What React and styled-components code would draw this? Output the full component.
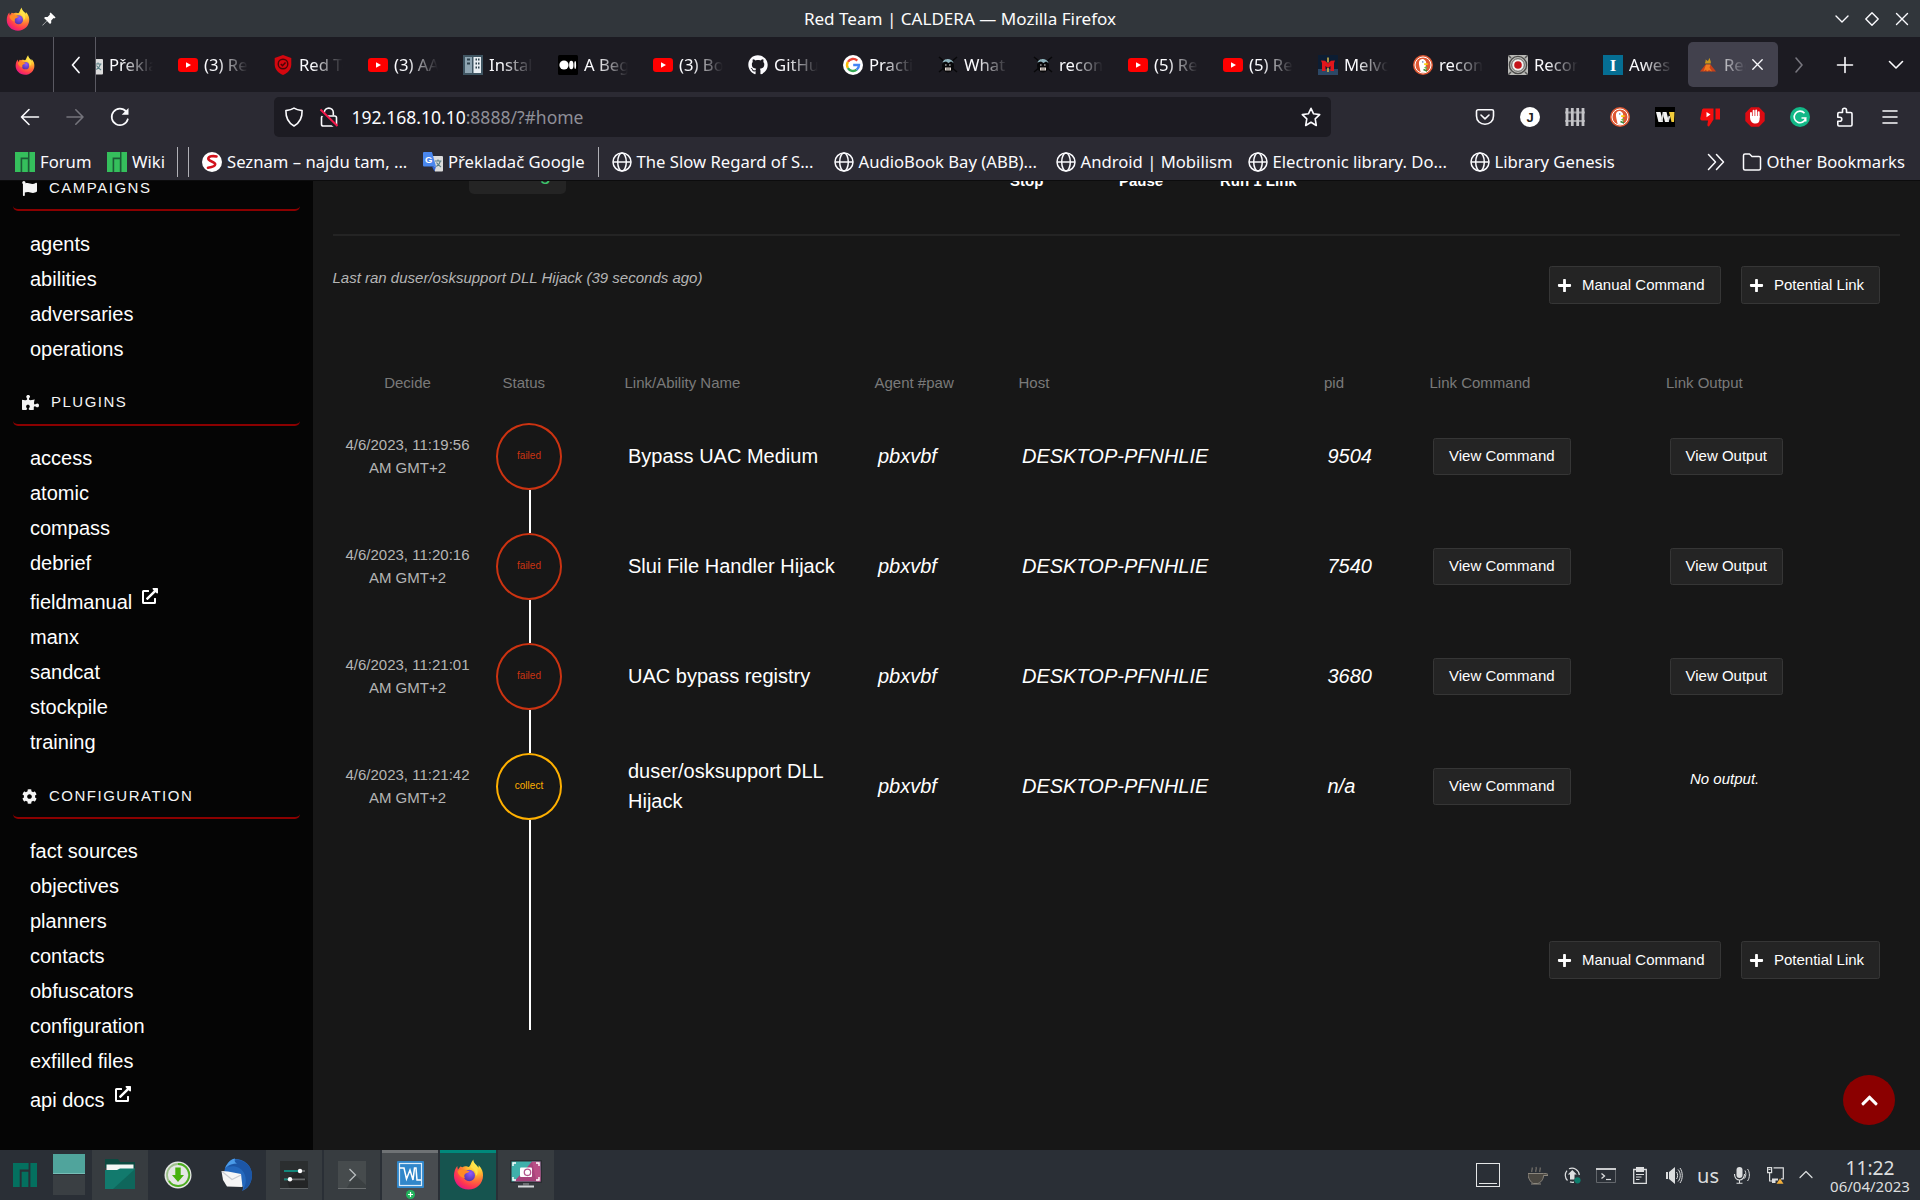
import React from "react";
import styled, { createGlobalStyle } from "styled-components";
import { FaFlag, FaPuzzlePiece, FaCog, FaExternalLinkAlt, FaPlus, FaChevronUp, FaGithub } from "react-icons/fa";

const ui = `"Noto Sans", "Open Sans", sans-serif`;
const web = `"Liberation Sans", Arial, sans-serif`;

const Global = createGlobalStyle`
  * { box-sizing: border-box; }
  html, body { margin: 0; padding: 0; background: #171717; }
  body { overflow: hidden; }
  svg { display: block; flex: none; }
`;

/* ---------- icons ---------- */

const Svg = ({ s = 20, w, h, box = "0 0 20 20", children, ...rest }) => (
  <svg width={w || s} height={h || s} viewBox={box} fill="none" {...rest}>
    {children}
  </svg>
);

const Firefox = ({ s, id }) => (
  <Svg s={s} box="0 0 32 32">
    <defs>
      <radialGradient id={id + "a"} cx="0.78" cy="0.12" r="1">
        <stop offset="0.05" stopColor="#fff44f" />
        <stop offset="0.35" stopColor="#ffbd2f" />
        <stop offset="0.58" stopColor="#ff7139" />
        <stop offset="0.8" stopColor="#ff3750" />
        <stop offset="1" stopColor="#e31587" />
      </radialGradient>
      <radialGradient id={id + "b"} cx="0.6" cy="0.3" r="0.8">
        <stop offset="0" stopColor="#9059ff" />
        <stop offset="1" stopColor="#4b2fa0" />
      </radialGradient>
    </defs>
    <path d="M16 31.500C7.500 31.500 1 25 1 17.200 1 13.500 2.300 9.600 4.400 7.300L5 11 7.600 7.700 9.800 8.400C12 7 15 7.800 16 8.200 18 8 18.400 3.500 21 .5c0 4 3.500 5.500 5.400 8.500l.1-2.500C30 10 31 13.400 31 17 31 25.300 24.500 31.500 16 31.500z" fill={`url(#${id}a)`} />
    <circle cx="16.800" cy="17" r="5.900" fill={`url(#${id}b)`} />
    <path d="M4.600 13C6.500 10.300 10 9.800 12.600 11.300c1.300.9 3 1.100 4.500 1.100-.5 1.700-2.800 2-4 2.600-1.600.8-2 3-.7 4.600-3.500 0-6.500-2.600-7.800-6.600z" fill="#ff8a25" />
    <path d="M18 8c3 1.800 6 5 5.700 9.500C26 15.500 26 12 24.500 9.500 23 7.500 21.500 6 21.200 3.500 20 5 19.500 7 18 8z" fill="#ffe14a" />
  </Svg>
);

const Pin = () => (
  <Svg s={14} box="0 0 14 14">
    <path d="M8.600.4 13.600 5.400 12.200 6.400 11.600 6 9.200 8.600 9.200 11 8 12 5 9 .7 13.600.3 13.200 4.800 8.800 2 5.900 3.200 4.900 5.500 4.900 8 2.400 7.600 1.700z" fill="#fcfcfc" />
  </Svg>
);

const Line = ({ d, s = 20, color = "#fbfbfe", sw = 1.6, box = "0 0 20 20" }) => (
  <Svg s={s} box={box} stroke={color} strokeWidth={sw} strokeLinecap="round" strokeLinejoin="round">
    <path d={d} />
  </Svg>
);

const Youtube = () => (
  <Svg>
    <rect x="0" y="3" width="20" height="14" rx="3.200" fill="#f00" />
    <path d="M8 7.200 13 10 8 12.800z" fill="#fff" />
  </Svg>
);
const RedShield = () => (
  <Svg>
    <path d="M10 0 18.300 3V9.500C18.300 14.500 14.500 18.300 10 20 5.500 18.300 1.700 14.500 1.700 9.500V3z" fill="#d4070f" />
    <circle cx="10" cy="9" r="4.800" stroke="#4a0507" strokeWidth="1.400" />
    <path d="m7.800 9 1.700 1.700 3-3.200" stroke="#4a0507" strokeWidth="1.500" />
  </Svg>
);
const Cabinet = () => (
  <Svg>
    <rect width="20" height="20" fill="#3f5562" />
    <rect x="2" y="2" width="7" height="16" fill="#8fa5b2" />
    <rect x="10.500" y="2" width="7.500" height="16" fill="#e8eef2" />
    <path d="M4 4.500h3M4 8.500h3M12.500 4.500h1.500M15 4.500h1.500M12.500 8.500h1.500M15 8.500h1.500M12.500 12.500h1.500M15 12.500h1.500" stroke="#2f424d" strokeWidth="2" />
  </Svg>
);
const Medium = () => (
  <Svg>
    <rect width="20" height="20" rx="1.500" fill="#000" />
    <circle cx="6" cy="10" r="4.600" fill="#fff" />
    <ellipse cx="13.300" cy="10" rx="2.200" ry="4.300" fill="#fff" />
    <ellipse cx="17.200" cy="10" rx=".9" ry="3.900" fill="#fff" />
  </Svg>
);
const GoogleG = () => (
  <Svg>
    <circle cx="10" cy="10" r="10" fill="#fff" />
    <path d="M14.300 5.600A6 6 0 0 0 4.900 6.900" stroke="#ea4335" strokeWidth="2.400" />
    <path d="M4.900 6.900a6 6 0 0 0 0 6.200" stroke="#fbbc05" strokeWidth="2.400" />
    <path d="M4.900 13.100a6 6 0 0 0 8.700 1.700" stroke="#34a853" strokeWidth="2.400" />
    <path d="M13.600 14.800A6 6 0 0 0 16 10H10.200" stroke="#4285f4" strokeWidth="2.400" />
  </Svg>
);
const Ninja = () => (
  <Svg>
    <path d="m1 2 18 15M19 2 1 17" stroke="#08080a" strokeWidth="1.500" />
    <ellipse cx="10" cy="11" rx="6" ry="6.500" fill="#08080a" />
    <path d="M4.500 7.500C5.500 4.500 8 4 10 4S14.500 5 15.500 8l-2.500-1.500L10.500 8 8 6.500z" fill="#8fb3bd" />
    <path d="M7 10h1.600M11 10h1.600" stroke="#d9d9d9" strokeWidth="1.200" />
    <path d="M7 12.500h6v3H7z" fill="#e6dcd5" />
    <path d="M9 12.500v3M11 12.500v3" stroke="#333" strokeWidth=".7" />
  </Svg>
);
const Melvor = () => (
  <Svg>
    <rect width="20" height="20" fill="#0c1d33" />
    <rect y="14" width="20" height="6" fill="#2c4866" />
    <path d="M4 16V8L3 5.500l4 .3L10 8.500l3-2.700 4-.3L16 8v8h-3.500V11L10 13 7.500 11v5z" fill="#e0161c" />
    <path d="M10 2.500v5M10 13v4" stroke="#e9c64b" strokeWidth="1.400" />
  </Svg>
);
const Duck = () => (
  <Svg>
    <circle cx="10" cy="10" r="10" fill="#de5833" />
    <circle cx="10" cy="10" r="8" fill="#de5833" stroke="#fff" strokeWidth="1" />
    <path d="M7.500 16.800C7 13 5.500 9.500 6 7c.5-2.500 3-3.500 5-2.500 1.500.7 2.200 2 2.200 3.800 0 1.500-.8 2.500-.6 4.200.2 1.500.7 3 1 4.300-2 1-4.300.8-6.100 0z" fill="#fff" />
    <path d="M11 8.500c1.800-.6 3.500-.4 4.700.2-.8 1.100-2.800 1.600-4.500 1.300z" fill="#fdd20a" />
    <path d="m10.800 12.600 3 1.600V11.600z" fill="#65bc46" />
    <path d="M10.500 14.500 14 16" stroke="#3a8b3a" strokeWidth="1.600" />
    <circle cx="9.800" cy="6.900" r=".7" fill="#2d4f8e" />
  </Svg>
);
const Target = () => (
  <Svg>
    <rect width="20" height="20" fill="#b9b9b6" />
    <circle cx="10" cy="10" r="8.600" stroke="#4b4b49" strokeWidth="1.400" />
    <circle cx="10" cy="10" r="6.300" fill="#f0f0ee" stroke="#5e5e5c" strokeWidth="1" />
    <circle cx="10" cy="10" r="3.800" fill="#c4141b" />
    <path d="m0 0 3 3M20 0l-3 3M0 20l3-3M20 20l-3-3" stroke="#555" strokeWidth="1.500" />
  </Svg>
);
const LetterSvg = ({ bg, color, ch, round, font = web, size = 14, weight = 400 }) => (
  <Svg>
    {round ? <circle cx="10" cy="10" r="10" fill={bg} /> : <rect width="20" height="20" fill={bg} />}
    <text x="10" y={10 + size * 0.36} textAnchor="middle" fontFamily={font} fontSize={size} fontWeight={weight} fill={color}>
      {ch}
    </text>
  </Svg>
);
const Volcano = () => (
  <Svg s={20}>
    <path d="M2 16.500 7.500 9.500h5L18 16.500z" fill="#c8401a" />
    <path d="M5.500 16.500 8 9.500h4.500l-1 3 2.500 4-3-1.500-2 1.500-1-2z" fill="#f07a1f" />
    <path d="M7 8.500c0-1.500 1-2 .5-4 1.500.5 1.600 1.500 2.300 1.500S10.500 3.500 12 3c-.5 2 1.500 3 .7 5.500z" fill="#c9961b" />
  </Svg>
);
const Manjaro = ({ s = 20, c = "#35bf5c", bg = "#1c5a36" }) => (
  <Svg s={s}>
    {bg !== "none" && <rect width="20" height="20" fill={bg} />}
    <path d="M0 0h13v5.500H5.600V20H0zM7.200 7.200H12.800V20H7.200zM14.500 0H20v20h-5.500z" fill={c} />
  </Svg>
);
const Seznam = () => (
  <Svg>
    <circle cx="10" cy="10" r="10" fill="#fff" />
    <path d="M14.500 4.500C11 3.600 6.500 4.200 6.300 6.800 6.200 9.500 13.300 9.500 13.200 12.300 13.100 14.500 9.500 15.300 6 15.800" stroke="#d2111b" strokeWidth="2.600" strokeLinecap="round" />
  </Svg>
);
const Translate = () => (
  <Svg>
    <path d="M8 4h11a1 1 0 0 1 1 1v13.500a1 1 0 0 1-1 1h-7z" fill="#dcdcdc" />
    <path d="M12 9h6.500M15 7.500V9M17.500 9c-.8 2.800-2.500 4.500-4.200 5.500M13.500 10.500c1 1.800 2.500 3 4.500 4.500" stroke="#5b7f86" strokeWidth="1.100" />
    <path d="M1 0h8l4 14.500H1a1 1 0 0 1-1-1V1a1 1 0 0 1 1-1z" fill="#4a87ee" />
    <path d="m9 14.500 4 0-1.500 5z" fill="#3367d6" />
    <text x="5.600" y="10.600" textAnchor="middle" fontFamily={web} fontSize="9.500" fontWeight="700" fill="#fff">G</text>
  </Svg>
);
const Globe = () => (
  <Svg stroke="#fbfbfe" strokeWidth="1.500">
    <circle cx="10" cy="10" r="9" />
    <ellipse cx="10" cy="10" rx="4.300" ry="9" />
    <path d="M1 10h18" />
  </Svg>
);
const Shield = () => (
  <Line d="M10 1.100C12.300 2.600 15 3.200 18.100 3.600 18.300 10.500 15.800 16 10 19 4.200 16 1.700 10.500 1.900 3.600 5 3.200 7.700 2.600 10 1.100z" />
);
const LockSlash = () => (
  <Svg>
    <path d="M5.300 8.500V5.600a4.500 4.500 0 0 1 9 0v2.900" stroke="#fbfbfe" strokeWidth="1.600" />
    <rect x="2.500" y="9" width="15" height="10" rx="1.800" stroke="#fbfbfe" strokeWidth="1.600" />
    <path d="M1 4 18 20.500" stroke="#1c1b22" strokeWidth="4" />
    <path d="M1.500 2.500 18.500 19" stroke="#f5184a" strokeWidth="2" />
  </Svg>
);
const Star = () => (
  <Line d="m10 1.300 2.600 5.500 6.100.8-4.500 4.200 1.100 6.700L10 15.300 4.700 18.500l1.100-6.700L1.300 7.600l6.100-.8z" />
);
const Pocket = () => (
  <Svg stroke="#fbfbfe" strokeWidth="1.600" strokeLinecap="round" strokeLinejoin="round">
    <path d="M3 2.800h14a1.500 1.500 0 0 1 1.500 1.500V9c0 5-3.800 8.300-8.500 8.300S1.500 14 1.500 9V4.300A1.500 1.500 0 0 1 3 2.800z" />
    <path d="m6 8 4 3.800L14 8" />
  </Svg>
);
const Fence = () => (
  <Svg>
    <path d="M0 5.500h20M0 14h20" stroke="#929297" strokeWidth="1.800" />
    <path d="M2 1v18M7.300 1v18M12.700 1v18M18 1v18" stroke="#c4c4c8" strokeWidth="2.800" />
  </Svg>
);
const Wiki = () => (
  <Svg>
    <rect width="20" height="20" fill="#000" />
    <path d="M1 5H5.500L8 15H3.500zM7.500 5H11.500L14 15H10z" fill="#f3f3f3" />
    <path d="M6.500 14 8.500 6M13 14l1.500-5" stroke="#d9d9d9" strokeWidth="1.800" />
    <path d="M14 5h5.500l-.5 10h-2.500z" fill="#f2cd3c" />
  </Svg>
);
const Dislike = () => (
  <Svg>
    <path d="M4 1.500h9.500v11L9 19.500c-1.500 0-1.800-1-1.500-2.500l.6-3.500H2C.8 13.500 0 12.500.3 11.300L2 3c.3-1 1-1.500 2-1.500zM15.500 1.500H20v11h-4.500z" fill="#f50d0d" />
    <path d="m6.500 5 4 2.600-4 2.600z" fill="#fff" />
  </Svg>
);
const Adblock = () => (
  <Svg>
    <path d="M6 .3h8L19.700 6v8L14 19.700H6L.3 14V6z" fill="#dc0b12" />
    <path d="M6 10.500V6M8.600 9.500V3.800M11.200 9.500V3.500M13.700 10V5.300" stroke="#fff" strokeWidth="1.900" strokeLinecap="round" />
    <path d="M5.200 9h9.400v3c0 3-1.600 4.500-4 4.500-3.500 0-4.800-2-5.400-4.500z" fill="#fff" />
  </Svg>
);
const Grammarly = () => (
  <Svg>
    <circle cx="10" cy="10" r="10" fill="#12b887" />
    <path d="M14.500 6.300a5.800 5.800 0 1 0 1.200 4.700H11.500M15.700 11v3.500" stroke="#fff" strokeWidth="1.600" />
  </Svg>
);
const Extension = () => (
  <Line d="M7.500 5.500V3.200a2 2 0 0 1 4 0V5.500h4.300A1.200 1.200 0 0 1 17 6.700V17.800A1.200 1.200 0 0 1 15.800 19H4a1.200 1.200 0 0 1-1.200-1.200V14.300h2a2 2 0 0 0 0-4h-2V6.700A1.200 1.200 0 0 1 4 5.500z" />
);
const Folder = () => (
  <Line d="M1.500 16.500V3.500A1.500 1.500 0 0 1 3 2h4.500L10 4.500h7A1.500 1.500 0 0 1 18.500 6v10.500A1.500 1.500 0 0 1 17 18H3a1.500 1.500 0 0 1-1.500-1.500z" sw={1.5} />
);

/* task bar icons */
const FileManager = () => (
  <Svg w={30} h={31} box="0 0 30 31">
    <path d="M0 0h13l2 3h15v6H0z" fill="#0c4a41" />
    <path d="M1.500 5.500h27V13h-27z" fill="#f4f6f5" />
    <path d="M0 11h12l3-1.500h15V30H0z" fill="#127a6d" />
    <path d="m8 30 22-20v20z" fill="#0f665b" />
  </Svg>
);
const Download = () => (
  <Svg s={28} box="0 0 28 28">
    <circle cx="14" cy="14" r="13.500" fill="#e5e7e5" />
    <circle cx="14" cy="14" r="11" stroke="#9cc08a" strokeWidth="1.800" />
    <path d="M14 3a11 11 0 1 1-9 17" stroke="#4cae1f" strokeWidth="1.800" />
    <path d="M11.300 6.500h5.400V14H20l-6 7-6-7h3.300z" fill="#47b10d" />
  </Svg>
);
const Thunderbird = () => (
  <Svg w={32} h={34} box="0 0 32 34">
    <path d="M5 10C8 4 11 1 15 1c10 0 17 7 17 16 0 8-4 14-10 16 1-2 1-3 1-5L12 28C6 26 3 20 4 15z" fill="#2468bd" />
    <path d="M17 2c8 0 15 7 15 15 0 7-4 13-9 15 3-5 4-11 1-17C21 9 14 7 8 9c2-4 5-6 9-7z" fill="#1c56a6" />
    <path d="M5 10C8 4 12 .5 15 .5c-1 2.500 0 4 2 5-4 0-8 1-12 4.500z" fill="#4b9be8" />
    <path d="M1.500 13 8 13.500 21 16 22.500 29 7 28.500 3 22z" fill="#f6f6f6" />
    <path d="m2 13.500 10 8 9-4.500" stroke="#c9ccd2" strokeWidth="1.200" />
  </Svg>
);
const Sliders = () => (
  <Svg s={28} box="0 0 28 28">
    <rect width="28" height="28" fill="#2b2e2f" />
    <path d="M18 10 28 20v8H10L6 18z" fill="#232526" />
    <path d="M4 10h21M4 18.300h21" stroke="#66696a" strokeWidth="1.800" />
    <path d="M4 10h15M4 18.300h5" stroke="#12877a" strokeWidth="1.800" />
    <circle cx="20" cy="10" r="2.200" fill="#fff" />
    <circle cx="10" cy="18.300" r="2.200" fill="#fff" />
    <path d="M0 27.500h28" stroke="#606466" />
  </Svg>
);
const Konsole = () => (
  <Svg s={28} box="0 0 28 28">
    <rect width="28" height="28" fill="#464b4d" />
    <path d="M17 14 28 24v4H8z" fill="#3b4042" />
    <path d="m11.500 8 6 6-6 6" stroke="#b8bcbe" strokeWidth="1.300" />
    <path d="M0 27.500h28" stroke="#6a6e70" />
  </Svg>
);
const Monitor = () => (
  <Svg s={27} box="0 0 27 27">
    <rect width="27" height="27" rx="1" fill="#3187ca" />
    <rect x="2.500" y="2.500" width="22" height="22" stroke="#dcecf8" strokeWidth="1.200" />
    <path d="M2.500 7H7l2.500 11 3.500-9 3 10 1.500-12 1.500 0 1 12h4" stroke="#fff" strokeWidth="1.500" />
  </Svg>
);
const Screenshot = () => (
  <Svg w={32} h={30} box="0 0 32 30">
    <rect width="32" height="23" rx="1" fill="#2a2c30" />
    <path d="M1.500 1.500h29v20h-29z" fill="#3fb0ab" />
    <path d="M4 21.500 16 8.500 22 1.500l8.500 9v11z" fill="#a8437b" />
    <path d="m22 1.500 8.500 0v20h-4z" fill="#b94d85" />
    <path d="M3 6V3h3M26 3h3v3M3 17v3h3M26 20h3v-3" stroke="#fff" strokeWidth="1.400" />
    <rect x="10" y="7.500" width="12" height="9.500" rx="1" fill="#fff" />
    <circle cx="17.500" cy="12.300" r="3.200" stroke="#b2568c" strokeWidth="1.300" />
    <path d="M13 23h6v2.500h-6z" fill="#6b6e72" />
    <path d="M8 26.500h16" stroke="#d5d8da" strokeWidth="2" />
  </Svg>
);

const tc = "#dcdedf";
const Coffee = () => (
  <Svg w={20} h={19} box="0 0 20 19">
    <path d="M4 6c-1-1.500 1-2.500 0-4.500M8 6C7 4.500 9 3.500 8 1M12 6c-1-1.500 1-2.500 0-4.500" stroke="#77736c" strokeWidth="1.200" />
    <path d="M0 7.500h15.500c2 0 3.500 0 4.500 1v1h-4.500c0 4-3 7.500-6 8h-4C2.500 16.500 0 12 0 7.500z" fill="#4a4741" stroke="#8b867d" strokeWidth="1" />
    <path d="M3 18h10" stroke="#8b867d" />
  </Svg>
);
const Update = () => (
  <Svg w={17} h={17} box="0 0 17 17">
    <path d="M5 1.800A7.300 7.300 0 0 1 15.300 8M3.500 13.500A7.300 7.300 0 0 1 3 3.600M10 15.200a7.300 7.300 0 0 1-4-.3" stroke={tc} strokeWidth="1.200" />
    <path d="m8.300 3 4.500 4.500H10.500V12.500H6V7.500H3.800z" fill={tc} />
    <circle cx="13.500" cy="13.300" r="3.100" fill="#0e7d6c" />
  </Svg>
);
const Term = () => (
  <Svg w={20} h={15} box="0 0 20 15">
    <path d="M.5 2v12.500h19V2" stroke="#63676c" />
    <path d="M0 1h20" stroke={tc} strokeWidth="1.800" />
    <path d="m5.500 5.500 3 2.500-3 2.500" stroke={tc} strokeWidth="1.300" />
    <path d="M10 11.500h5" stroke={tc} strokeWidth="1.200" />
  </Svg>
);
const Clip = () => (
  <Svg w={14} h={17} box="0 0 14 17">
    <path d="M.7 2.500h12.600v13.800H.7z" stroke={tc} strokeWidth="1.300" />
    <path d="M3 0h8v5H3z" fill={tc} />
    <path d="M3 7.500h8M3 10h5.500M3 12.500h3.500" stroke={tc} strokeWidth="1.100" />
  </Svg>
);
const Volume = () => (
  <Svg w={17} h={17} box="0 0 17 17">
    <path d="M0 5h2v7H0zM3 5l6-5v17L3 12z" fill={tc} />
    <path d="M10.500 5c1.500 1.500 1.500 5.500 0 7M12 2.500c3 3 3 9 0 12M14 1c3 4 3 11 0 15" stroke={tc} strokeWidth="1" />
  </Svg>
);
const Mic = () => (
  <Svg w={17} h={17} box="0 0 17 17">
    <rect x="2.500" y="0" width="6" height="11" rx="3" fill={tc} />
    <path d="M.5 7c0 8 10 8 10 0M5.500 13v3M2.500 16.300h6" stroke={tc} strokeWidth="1.100" />
    <path d="M11 3.500c1.200 2 1.200 6-.5 8M13.500 2c2.500 3 2.500 9 0 12" stroke={tc} strokeWidth="1" />
  </Svg>
);
const Network = () => (
  <Svg w={17} h={17} box="0 0 17 17">
    <path d="M.6.6h4v5h-4zM2.600 6v8H6M6.500.8h9.800v11H14M1.500 2.500h2" stroke={tc} strokeWidth="1.200" />
    <path d="M5 11.500h6v2H8.500v2.500H5z" fill={tc} />
    <path d="m13 11.500 3.500 5.200h-7z" fill="#f3b13c" />
  </Svg>
);

/* ---------- window chrome ---------- */

const Screen = styled.div`
  width: 1920px;
  height: 1200px;
  display: flex;
  flex-direction: column;
  overflow: hidden;
  font-family: ${ui};
  color: #fbfbfe;
`;

const TitleBar = styled.header`
  height: 37px;
  flex: none;
  display: grid;
  grid-template-columns: 1fr auto 1fr;
  align-items: center;
  background: #31363b;
  color: #fcfcfc;
  font-size: 17.07px;
  line-height: 37px;
  white-space: nowrap;
`;
const TitleLeft = styled.div`
  display: flex;
  align-items: center;
  gap: 12px;
  padding-left: 6px;
`;
const WindowButtons = styled.div`
  display: flex;
  justify-content: flex-end;
  align-items: center;
  padding-right: 3px;
`;
const Slot = styled.span`
  width: ${(p) => p.$w || 30}px;
  display: flex;
  align-items: center;
  justify-content: center;
`;

const TabStrip = styled.nav`
  height: 55px;
  flex: none;
  display: flex;
  align-items: center;
  background: #1c1b22;
`;
const PinnedArea = styled.div`
  width: ${(p) => p.$w}px;
  height: 55px;
  flex: none;
  display: flex;
  align-items: center;
  justify-content: center;
  padding-right: ${(p) => p.$pr || 0}px;
  padding-left: ${(p) => p.$pl || 0}px;
  border-right: 1px solid #5a5962;
`;
const Tabs = styled.div`
  width: 1685px;
  flex: none;
  display: flex;
  gap: 5px;
  overflow: hidden;
`;
const Tab = styled.div`
  width: 90px;
  height: 45px;
  flex: none;
  display: flex;
  align-items: center;
  gap: 6px;
  padding-left: 10px;
  border-radius: 5px;
  background: ${(p) => (p.$active ? "#42414d" : "transparent")};
  &:first-child { margin-left: -23px; }
`;
const TabText = styled.span`
  width: ${(p) => (p.$short ? 22 : 44)}px;
  overflow: hidden;
  white-space: nowrap;
  font-size: 16.67px;
  line-height: 30px;
  mask-image: linear-gradient(to right, #000 ${(p) => (p.$short ? -40 : 30)}%, transparent 100%);
`;

const NavBar = styled.div`
  height: 50px;
  flex: none;
  display: flex;
  align-items: center;
  padding: 0 7.5px;
  background: #2b2a33;
`;
const UrlField = styled.div`
  width: 1057px;
  height: 40px;
  margin-left: 131px;
  padding: 0 10px;
  display: flex;
  align-items: center;
  gap: 15px;
  border-radius: 5px;
  background: #1c1b22;
`;
const Url = styled.span`
  flex: 1;
  margin-left: -2px;
  font-size: 17.5px;
  line-height: 38px;
  color: #8f8f98;
  b { font-weight: 400; color: #fbfbfe; }
`;
const Extensions = styled.div`
  margin-left: auto;
  display: flex;
`;

const Bookmarks = styled.div`
  height: 39px;
  flex: none;
  display: flex;
  align-items: center;
  padding: 1px 0 0 15px;
  background: #2b2a33;
  border-bottom: 1px solid #0c0c0d;
`;
const Bookmark = styled.div`
  width: ${(p) => p.$w}px;
  flex: none;
  display: flex;
  align-items: center;
  gap: 5px;
  font-size: 16.67px;
  line-height: 30px;
  white-space: nowrap;
`;
const BookmarkRule = styled.i`
  width: 1px;
  height: 30px;
  flex: none;
  margin-right: ${(p) => p.$mr}px;
  background: #b0b0b6;
`;

/* ---------- page ---------- */

const Page = styled.div`
  height: 969px;
  flex: none;
  display: flex;
  overflow: hidden;
  font-family: ${web};
`;
const Sidebar = styled.aside`
  width: 313px;
  flex: none;
  padding: 0 13px;
  background: #050505;
`;
const MenuHead = styled.h2`
  height: ${(p) => (p.$cut ? 30 : 44)}px;
  margin: ${(p) => (p.$cut ? 0 : 15)}px 0 0;
  padding: 0 0 ${(p) => p.$pb}px 9px;
  display: flex;
  align-items: ${(p) => (p.$cut ? "flex-end" : "center")};
  gap: 12px;
  border-bottom: 2px solid #8b0000;
  border-radius: 5px;
  font-size: 15px;
  font-weight: 400;
  line-height: 16px;
  letter-spacing: 1.5px;
  text-transform: uppercase;
  color: #f5f5f5;
`;
const MenuList = styled.ul`
  margin: 0;
  padding: ${(p) => p.$top}px 0 0 17px;
  list-style: none;
`;
const MenuItem = styled.li`
  height: ${(p) => (p.$ext ? 39 : 35)}px;
  padding-top: ${(p) => (p.$ext ? 9 : 5)}px;
  display: flex;
  gap: 10px;
  font-size: 20px;
  line-height: 25px;
  color: #fff;
  svg { margin-top: -2px; }
`;

const Main = styled.main`
  width: 1607px;
  padding: 0 20px;
  background: #171717;
  color: #fff;
`;
const ControlStrip = styled.div`
  height: 13px;
  display: flex;
  align-items: flex-end;
  overflow: hidden;
  padding-left: 136px;
`;
const StateChip = styled.span`
  width: 97px;
  height: 41px;
  flex: none;
  margin-right: 444px;
  border-radius: 5px;
  background: #242424;
  color: #3ec46d;
  font-size: 20px;
  line-height: 41px;
  text-align: center;
`;
const Control = styled.strong`
  width: ${(p) => p.$w}px;
  flex: none;
  padding-bottom: 5px;
  font-size: 15px;
  line-height: 16px;
`;
const Divider = styled.hr`
  height: 2px;
  margin: 40px 0 30px;
  border: 0;
  background: #242424;
`;
const InfoRow = styled.div`
  display: flex;
  justify-content: space-between;
  height: 38px;
`;
const LastRan = styled.em`
  margin-left: -0.5px;
  font-size: 15px;
  line-height: 23px;
  color: #b5b5b5;
`;
const Actions = styled.div`
  display: flex;
  gap: 20px;
  padding-right: 20px;
`;
const Button = styled.button`
  height: ${(p) => (p.$icon ? 38 : 37)}px;
  width: ${(p) => p.$w}px;
  flex: none;
  display: inline-flex;
  align-items: center;
  gap: 10px;
  padding: 0 0 ${(p) => (p.$icon ? 1 : 2)}px ${(p) => (p.$icon ? 7 : 15)}px;
  border: 1px solid #363636;
  border-radius: 2.5px;
  background: #242424;
  color: #fff;
  font-family: ${web};
  font-size: 15px;
  white-space: nowrap;
  svg { margin-top: 1px; }
`;

const columns = "149px 142.5px 250px 144px 305.5px 105.5px 236.5px 1fr";
const HeadRow = styled.div`
  display: grid;
  grid-template-columns: ${columns};
  height: 98px;
  padding-top: 67px;
  font-size: 15px;
  line-height: 24px;
  color: #7a7a7a;
`;
const HeadCell = styled.span`
  padding-left: ${(p) => p.$pl || 0}px;
  text-align: ${(p) => (p.$center ? "center" : "left")};
`;
const Row = styled.div`
  display: grid;
  grid-template-columns: ${columns};
  height: 110px;
`;
const Cell = styled.div`
  display: flex;
  align-items: center;
  padding: 0 10px ${(p) => p.$up ?? 3}px ${(p) => p.$pl ?? 3.5}px;
  font-size: ${(p) => (p.$small ? 15 : 20)}px;
  line-height: 30px;
  font-style: ${(p) => (p.$italic ? "italic" : "normal")};
`;
const DateCell = styled.div`
  display: flex;
  align-items: center;
  padding: 0 8px 2px;
  font-size: 15px;
  line-height: 23px;
  text-align: center;
  color: #b5b5b5;
`;
const StatusCell = styled.div`
  display: flex;
  flex-direction: column;
  align-items: center;
  width: 94px;
`;
const Segment = styled.i`
  width: 2px;
  height: ${(p) => p.$h}px;
  margin-left: 2px;
  background: ${(p) => (p.$off ? "transparent" : "#fff")};
`;
const Circle = styled.div`
  width: 66px;
  height: 67px;
  flex: none;
  border: 2px solid ${(p) => p.$c};
  border-radius: 50%;
  font-size: 10px;
  line-height: 62px;
  text-align: center;
  color: ${(p) => p.$c};
`;
const Footer = styled.div`
  display: grid;
  grid-template-columns: 149px 94px 1fr;
  height: 233px;
`;
const FooterActions = styled.div`
  display: flex;
  flex-direction: column;
  align-items: flex-end;
  padding-top: 99px;
`;
const ToTop = styled.button`
  width: 52px;
  height: 50px;
  margin: 96px 5px 0 0;
  display: flex;
  align-items: center;
  justify-content: center;
  padding: 0;
  border: 0;
  border-radius: 50%;
  background: #8b0000;
  color: #fff;
`;

/* ---------- desktop panel ---------- */

const Panel = styled.footer`
  height: 50px;
  flex: none;
  display: flex;
  background: #2a2f36;
  color: #dcdedf;
`;
const Launcher = styled.div`
  width: 53px;
  padding: 13px 0 0 13px;
`;
const Pager = styled.div`
  width: 39px;
  padding-top: 4px;
`;
const Desktop = styled.div`
  width: 32px;
  height: 20px;
  margin-bottom: 1px;
  background: ${(p) => (p.$on ? "#50a49c" : "#3a3f43")};
  border-bottom: ${(p) => (p.$on ? "1px solid #77bdb6" : "0")};
`;
const taskTone = {
  none: ["transparent", "transparent"],
  open: ["#373c40", "#373c40"],
  alert: ["#484c50", "#6f7275"],
  active: ["#16544f", "#00897b"],
};
const Task = styled.div`
  width: 56px;
  height: 50px;
  margin-right: 2px;
  display: flex;
  flex-direction: column;
  align-items: center;
  justify-content: center;
  border-top: 3px solid ${(p) => taskTone[p.$tone][1]};
  padding-bottom: 4px;
  background: ${(p) => taskTone[p.$tone][0]};
  position: relative;
`;
const Badge = styled.span`
  position: absolute;
  bottom: 1px;
  left: 24px;
  display: flex;
`;
const Tray = styled.div`
  margin-left: auto;
  display: flex;
  align-items: center;
`;
const Peek = styled.div`
  width: 24px;
  height: 24px;
  margin-right: 26px;
  padding: 0 2px 2px;
  display: flex;
  align-items: flex-end;
  border: 1px solid #e4e6e7;
  i { height: 1px; flex: 1; background: #e4e6e7; }
`;
const Layout = styled.span`
  width: 36px;
  margin-left: 4px;
  padding-top: 1px;
  text-align: center;
  font-size: 20px;
  line-height: 30px;
`;
const Clock = styled.div`
  width: 100px;
  padding-top: 1px;
  display: flex;
  flex-direction: column;
  align-items: center;
  font-size: 19.2px;
  line-height: 20px;
  small { font-size: 15px; line-height: 16px; }
`;

/* ---------- data ---------- */

const tabs = [
  [<Translate />, "Překladač"], [<Youtube />, "(3) Red"], [<RedShield />, "Red Te"], [<Youtube />, "(3) AAA"],
  [<Cabinet />, "Install"], [<Medium />, "A Begi"], [<Youtube />, "(3) Boo"], [<FaGithub size={20} />, "GitHub"],
  [<GoogleG />, "Practic"], [<Ninja />, "What i"], [<Ninja />, "recon"], [<Youtube />, "(5) Rec"], [<Youtube />, "(5) Rec"],
  [<Melvor />, "Melvor"], [<Duck />, "recon"], [<Target />, "Recon"],
  [<LetterSvg bg="#056e93" color="#fff" ch="I" font={`"Liberation Serif", serif`} size={17} weight={700} />, "Awes"],
];

const menus = [
  { title: "Campaigns", icon: <FaFlag size={15} />, pb: 13, items: ["agents", "abilities", "adversaries", "operations"] },
  { title: "Plugins", icon: <FaPuzzlePiece size={17} />, pb: 2, items: ["access", "atomic", "compass", "debrief", "fieldmanual", "manx", "sandcat", "stockpile", "training"] },
  { title: "Configuration", icon: <FaCog size={15} />, pb: 0, items: ["fact sources", "objectives", "planners", "contacts", "obfuscators", "configuration", "exfilled files", "api docs"] },
];

const links = [
  { time: "11:19:56", status: "failed", name: "Bypass UAC Medium", pid: "9504", out: true },
  { time: "11:20:16", status: "failed", name: "Slui File Handler Hijack", pid: "7540", out: true },
  { time: "11:21:01", status: "failed", name: "UAC bypass registry", pid: "3680", out: true },
  { time: "11:21:42", status: "collect", name: "duser/osksupport DLL Hijack", pid: "n/a", out: false },
];

const LinkActions = () => (
  <Actions>
    <Button $icon $w={172}><FaPlus size={15} />Manual Command</Button>
    <Button $icon $w={139}><FaPlus size={15} />Potential Link</Button>
  </Actions>
);

export default function App() {
  return (
    <Screen>
      <Global />
      <TitleBar>
        <TitleLeft><Firefox s={24} id="t" /><Pin /></TitleLeft>
        <span>Red Team | CALDERA — Mozilla Firefox</span>
        <WindowButtons>
          <Slot><Line s={14} box="0 0 14 14" sw={1.4} d="m1 4 6 6 6-6" /></Slot>
          <Slot><Line s={14} box="0 0 14 14" sw={1.4} d="m7 .8 6.200 6.200L7 13.200.8 7z" /></Slot>
          <Slot><Line s={14} box="0 0 14 14" sw={1.4} d="m1.500 1.500 11 11m0-11-11 11" /></Slot>
        </WindowButtons>
      </TitleBar>

      <TabStrip>
        <PinnedArea $w={54} $pr={3}><Firefox s={20} id="p" /></PinnedArea>
        <PinnedArea $w={42} $pl={3}><Line d="M13 2.500 6.500 10l6.500 7.500" sw={1.7} /></PinnedArea>
        <Tabs>
          {tabs.map(([icon, text], i) => (
            <Tab key={i}>{icon}<TabText>{text}</TabText></Tab>
          ))}
          <Tab $active>
            <Volcano />
            <TabText $short>Red</TabText>
            <Line s={11} box="0 0 11 11" sw={1.3} d="m.8.8 9.400 9.400m0-9.400L.8 10.200" />
          </Tab>
        </Tabs>
        <Slot $w={36}><Line d="m7 3 6 7-6 7" color="#77767e" /></Slot>
        <Slot $w={55}><Line d="M10 2.500v15M2.500 10h15" /></Slot>
        <Slot $w={47}><Line d="M3.500 6.500 10 13l6.500-6.500" /></Slot>
      </TabStrip>

      <NavBar>
        <Slot $w={45}><Line d="M18.500 10H1.500M9 2.500 1.500 10 9 17.500" /></Slot>
        <Slot $w={45}><Line d="M2 10h16M10.800 2.800 18 10l-7.200 7.200" color="#75747c" /></Slot>
        <Slot $w={45}>
          <Svg>
            <path d="M17.800 12.200A8.200 8.200 0 1 1 16.200 4.600" stroke="#fbfbfe" strokeWidth="1.700" strokeLinecap="round" />
            <path d="M18.500 1v6.800h-6.800z" fill="#fbfbfe" />
          </Svg>
        </Slot>
        <UrlField>
          <Shield />
          <LockSlash />
          <Url><b>192.168.10.10</b>:8888/?#home</Url>
          <Star />
        </UrlField>
        <Extensions>
          <Slot $w={45}><Pocket /></Slot>
          <Slot $w={45}><LetterSvg bg="#fff" color="#222" ch="J" round size={13} weight={700} /></Slot>
          <Slot $w={45}><Fence /></Slot>
          <Slot $w={45}><Duck /></Slot>
          <Slot $w={45}><Wiki /></Slot>
          <Slot $w={45}><Dislike /></Slot>
          <Slot $w={45}><Adblock /></Slot>
          <Slot $w={45}><Grammarly /></Slot>
          <Slot $w={45}><Extension /></Slot>
          <Slot $w={45}><Line d="M3 4h14M3 10h14M3 16h14" /></Slot>
        </Extensions>
      </NavBar>

      <Bookmarks>
        <Bookmark $w={92}><Manjaro />Forum</Bookmark>
        <Bookmark $w={70}><Manjaro />Wiki</Bookmark>
        <BookmarkRule $mr={10} />
        <BookmarkRule $mr={13} />
        <Bookmark $w={221}><Seznam />Seznam – najdu tam, ...</Bookmark>
        <Bookmark $w={175}><Translate />Překladač Google</Bookmark>
        <BookmarkRule $mr={12.5} />
        <Bookmark $w={222}><Globe />The Slow Regard of S...</Bookmark>
        <Bookmark $w={222}><Globe />AudioBook Bay (ABB)...</Bookmark>
        <Bookmark $w={192}><Globe />Android | Mobilism</Bookmark>
        <Bookmark $w={222}><Globe />Electronic library. Do...</Bookmark>
        <Bookmark $w={236}><Globe />Library Genesis</Bookmark>
        <Bookmark $w={36}><Line d="m2.500 2.500 7 7.500-7 7.500m8-15 7 7.500-7 7.500" sw={1.5} /></Bookmark>
        <Bookmark $w={170}><Folder />Other Bookmarks</Bookmark>
      </Bookmarks>

      <Page>
        <Sidebar>
          {menus.map((m, i) => (
            <React.Fragment key={m.title}>
              <MenuHead $cut={i === 0} $pb={m.pb}>{m.icon}{m.title}</MenuHead>
              <MenuList $top={i === 0 ? 16 : 15}>
                {m.items.map((t) => {
                  const ext = t === "fieldmanual" || t === "api docs";
                  return <MenuItem key={t} $ext={ext}>{t}{ext && <FaExternalLinkAlt size={16} />}</MenuItem>;
                })}
              </MenuList>
            </React.Fragment>
          ))}
        </Sidebar>

        <Main>
          <ControlStrip>
            <StateChip>running</StateChip>
            <Control $w={109}>Stop</Control>
            <Control $w={101}>Pause</Control>
            <Control $w={100}>Run 1 Link</Control>
          </ControlStrip>
          <Divider />
          <InfoRow>
            <LastRan>Last ran duser/osksupport DLL Hijack (39 seconds ago)</LastRan>
            <LinkActions />
          </InfoRow>

          <HeadRow>
            <HeadCell $center>Decide</HeadCell>
            <HeadCell $pl={20.5}>Status</HeadCell>
            <HeadCell>Link/Ability Name</HeadCell>
            <HeadCell>Agent #paw</HeadCell>
            <HeadCell>Host</HeadCell>
            <HeadCell>pid</HeadCell>
            <HeadCell>Link Command</HeadCell>
            <HeadCell>Link Output</HeadCell>
          </HeadRow>
          {links.map((l, i) => (
            <Row key={l.time}>
              <DateCell>4/6/2023, {l.time} AM GMT+2</DateCell>
              <StatusCell>
                <Segment $h={21} $off={i === 0} />
                <Circle $c={l.status === "failed" ? "#cc3311" : "#ffb000"}>{l.status}</Circle>
                <Segment $h={22} />
              </StatusCell>
              <Cell>{l.name}</Cell>
              <Cell $italic>pbxvbf</Cell>
              <Cell $italic>DESKTOP-PFNHLIE</Cell>
              <Cell $italic>{l.pid}</Cell>
              <Cell $up={1}><Button $w={138}>View Command</Button></Cell>
              {l.out ? (
                <Cell $up={1}><Button $w={113}>View Output</Button></Cell>
              ) : (
                <Cell $italic $small $pl={24} $up={16}>No output.</Cell>
              )}
            </Row>
          ))}
          <Footer>
            <span />
            <StatusCell><Segment $h={188} /></StatusCell>
            <FooterActions>
              <LinkActions />
              <ToTop><FaChevronUp size={19} /></ToTop>
            </FooterActions>
          </Footer>
        </Main>
      </Page>

      <Panel>
        <Launcher><Manjaro s={24} c="#04705f" bg="none" /></Launcher>
        <Pager><Desktop $on /><Desktop /></Pager>
        <Task $tone="open"><FileManager /></Task>
        <Task $tone="none"><Download /></Task>
        <Task $tone="none"><Thunderbird /></Task>
        <Task $tone="open"><Sliders /></Task>
        <Task $tone="open"><Konsole /></Task>
        <Task $tone="alert">
          <Monitor />
          <Badge>
            <Svg s={9} box="0 0 9 9">
              <circle cx="4.500" cy="4.500" r="4.500" fill="#23b45d" />
              <path d="M4.500 2v5M2 4.500h5" stroke="#fff" strokeWidth="1.200" />
            </Svg>
          </Badge>
        </Task>
        <Task $tone="active"><Firefox s={31} id="k" /></Task>
        <Task $tone="open"><Screenshot /></Task>
        <Tray>
          <Peek><i /></Peek>
          <Slot $w={24}><Coffee /></Slot>
          <Slot $w={44}><Update /></Slot>
          <Slot $w={24}><Term /></Slot>
          <Slot $w={44}><Clip /></Slot>
          <Slot $w={24}><Volume /></Slot>
          <Layout>us</Layout>
          <Slot $w={32}><Mic /></Slot>
          <Slot $w={34}><Network /></Slot>
          <Slot $w={28}><Line s={14} box="0 0 14 14" sw={1.2} color="#dcdedf" d="m1 9.500 6-6 6 6" /></Slot>
          <Clock>11:22<small>06/04/2023</small></Clock>
        </Tray>
      </Panel>
    </Screen>
  );
}
